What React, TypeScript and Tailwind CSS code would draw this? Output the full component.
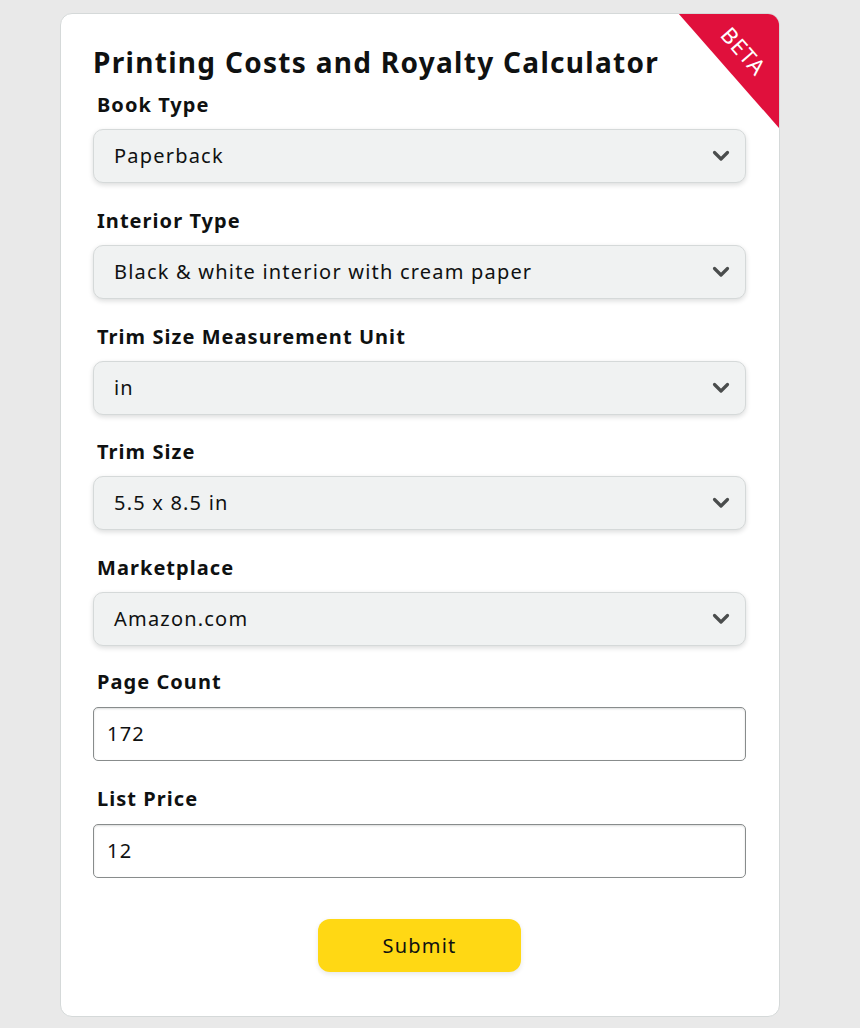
import React from "react";

const font = { fontFamily: '"Noto Sans", "Open Sans", Arial, sans-serif' };

function Chevron() {
  return (
    <svg width="18" height="12" viewBox="0 0 18 12" className="shrink-0">
      <path d="M2.5 2.5 L9 9 L15.5 2.5" fill="none" stroke="#4a4d4d" strokeWidth="3.2" strokeLinecap="round" strokeLinejoin="round" />
    </svg>
  );
}

function Label({ children }: { children: React.ReactNode }) {
  return (
    <div className="h-[24px] pl-[4px] text-[20px] leading-[24px] font-bold tracking-[1.05px] text-[#0f1111]">{children}</div>
  );
}

function SelectField({ label, value }: { label: string; value: string }) {
  return (
    <div className="flex flex-col">
      <Label>{label}</Label>
      <div className="mt-[12px] flex h-[54px] items-center justify-between rounded-[10px] border border-[#d5d9d9] bg-[#f0f2f2] pl-[20px] pr-[15px] shadow-[0_2px_5px_rgba(15,17,17,0.15)]">
        <span className="text-[20px] tracking-[1.2px] text-[#0f1111]">{value}</span>
        <Chevron />
      </div>
    </div>
  );
}

function InputField({ label, value }: { label: string; value: string }) {
  return (
    <div className="flex flex-col">
      <Label>{label}</Label>
      <div className="mt-[13px] flex h-[54px] items-center rounded-[5px] border border-[#888c8c] bg-white pl-[13px] shadow-[inset_0_1px_2px_rgba(15,17,17,0.15)]">
        <span className="text-[20px] tracking-[1.2px] text-[#0f1111]">{value}</span>
      </div>
    </div>
  );
}

export default function App() {
  return (
    <div className="min-h-[1028px] w-full bg-[#e9e9e9] pt-[13px]" style={font}>
      <div className="relative ml-[60px] w-[720px] overflow-hidden rounded-[12px] border border-[#d5d9d9] bg-white pl-[32px] pr-[33px] pt-[30px] pb-[44px]">
        <div className="absolute right-0 top-0 h-[120px] w-[120px] overflow-hidden">
          <div className="absolute left-[-16px] top-[-30px] flex h-[100px] w-[240px] rotate-[48.7deg] items-end justify-center bg-[#e0103c]">
            <div className="flex h-[50px] items-center">
              <span className="text-[22px] tracking-[1px] text-white">BETA</span>
            </div>
          </div>
        </div>
        <h1 className="h-[36px] text-[28px] leading-[36px] font-bold tracking-[1.3px] text-[#0f1111]">Printing Costs and Royalty Calculator</h1>
        <div className="mt-[13px] flex flex-col gap-[25.75px]">
          <SelectField label="Book Type" value="Paperback" />
          <SelectField label="Interior Type" value="Black & white interior with cream paper" />
          <SelectField label="Trim Size Measurement Unit" value="in" />
          <SelectField label="Trim Size" value="5.5 x 8.5 in" />
          <SelectField label="Marketplace" value="Amazon.com" />
        </div>
        <div className="mt-[24px] flex flex-col gap-[26px]">
          <InputField label="Page Count" value="172" />
          <InputField label="List Price" value="12" />
        </div>
        <div className="mt-[41px] flex justify-center">
          <button className="h-[53px] w-[203px] rounded-[12px] bg-[#ffd814] text-[20px] tracking-[1.2px] text-[#0f1111] shadow-[0_2px_5px_rgba(213,217,217,0.6)]">Submit</button>
        </div>
      </div>
    </div>
  );
}
